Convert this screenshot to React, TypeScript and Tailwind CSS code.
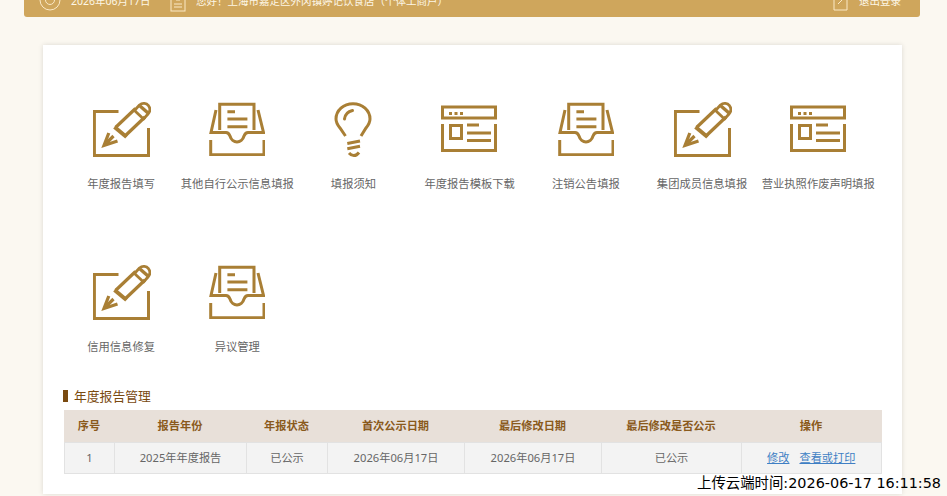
const CJK = "font-['Noto_Sans','Noto_Sans_CJK_SC',sans-serif]";

function PencilIcon() {
  return (
    <svg width="58" height="56" viewBox="0 0 58 56" fill="none" stroke="#a97f35" strokeWidth="3" className="ml-[1px]">
      <path d="M25.500 9.500H1.400V53.500H55.500V26" />
      <path d="M15.800 31L11 43.500L24.500 39" strokeWidth="3.200" />
      <path d="M13.500 41L20.500 34" strokeWidth="3.200" />
      <path d="M22.500 25.500L42.500 6.500M32 34L52 15" strokeWidth="3.200" />
      <path d="M21.500 25L33.500 35" strokeWidth="4" />
      <path d="M41.500 8.500L46.500 3C49.500 0.500 53.500 1.200 55.500 3.700C57.500 6.500 57 9.800 55 12L50.500 17Z" strokeWidth="2.800" strokeLinejoin="round" />
      <path d="M47 4L55 11" strokeWidth="3.400" />
    </svg>
  );
}

function InboxIcon() {
  return (
    <svg width="56" height="54" viewBox="0 0 56 54" fill="none" stroke="#a97f35" strokeWidth="3">
      <path d="M10.700 28V2.300H45V28" />
      <path d="M7 8L2 30.500H17C19 30.500 20 31.500 21 34C22 37.500 25 40 28 40C31 40 34 37.500 35 34C36 31.500 37 30.500 39 30.500H54.500L49 8" />
      <path d="M1.700 38V52.700H55V38" />
      <path d="M18.400 9.700H26M18.400 17H38.400M18.400 24.700H38.400" />
    </svg>
  );
}

function BulbIcon() {
  return (
    <svg width="40" height="58" viewBox="0 0 40 58" fill="none" stroke="#a97f35" strokeWidth="3" className="ml-[1px]">
      <path d="M11.500 34L6 26C3.500 23 2 20.500 2 17C2 8.500 9.500 1.700 19 1.700C28.500 1.700 36 8.500 36 17C36 20.500 34.500 23 32 26L27 34" />
      <path d="M10.500 17C11 13 14 9.500 18.500 8.500" strokeLinecap="round" />
      <path d="M13.300 41.500L26 39M13.300 46.800L26 44.300" />
      <path d="M15 51C18 54.500 22 54.500 25 50.500" />
    </svg>
  );
}

function BrowserIcon() {
  return (
    <svg width="58" height="48" viewBox="0 0 58 48" fill="none" stroke="#a97f35" strokeWidth="3" className="ml-[1px] mt-[3px]">
      <rect x="1.500" y="2" width="53" height="11" />
      <path d="M8 8.500h3M13.500 8.500h3M19 8.500h3" />
      <path d="M1.500 19V45.500H54.500V19" />
      <rect x="9.500" y="20.500" width="11" height="13" />
      <path d="M26 20h12M26 28h24M26 35.500h24" />
    </svg>
  );
}

const rows: { label: string; icon: "pencil" | "inbox" | "bulb" | "browser" }[][] = [
  [
    { label: "年度报告填写", icon: "pencil" },
    { label: "其他自行公示信息填报", icon: "inbox" },
    { label: "填报须知", icon: "bulb" },
    { label: "年度报告模板下载", icon: "browser" },
    { label: "注销公告填报", icon: "inbox" },
    { label: "集团成员信息填报", icon: "pencil" },
    { label: "营业执照作废声明填报", icon: "browser" },
  ],
  [
    { label: "信用信息修复", icon: "pencil" },
    { label: "异议管理", icon: "inbox" },
  ],
];

function Icon({ name }: { name: string }) {
  if (name === "pencil") return <PencilIcon />;
  if (name === "inbox") return <InboxIcon />;
  if (name === "bulb") return <BulbIcon />;
  return <BrowserIcon />;
}

const headers = ["序号", "报告年份", "年报状态", "首次公示日期", "最后修改日期", "最后修改是否公示", "操作"];
const widths = ["w-[50px]", "w-[132px]", "w-[81px]", "w-[137px]", "w-[137px]", "w-[140px]", "w-[140px]"];
const cells = ["1", "2025年年度报告", "已公示", "2026年06月17日", "2026年06月17日", "已公示"];

export default function App() {
  return (
    <div className={`relative h-[496px] w-[947px] overflow-hidden bg-[#fbf8f1] ${CJK}`}>
      <div className="ml-[24px] mr-[27px] flex h-[17px] items-center overflow-hidden rounded-b-[3px] bg-[#cfa65c] text-[10.500px] text-[#fdf6e6]">
        <div className="-mt-[14px] flex h-[17px] w-full items-center pl-[15px] pr-[19px]">
          <svg width="22" height="22" viewBox="0 0 22 22" fill="none" stroke="#fbe9c6" strokeWidth="1" className="-mt-[3px] shrink-0">
            <circle cx="11" cy="11" r="10" />
            <circle cx="11" cy="11" r="4.500" />
          </svg>
          <span className="ml-[10px] w-[99px] shrink-0">2026年06月17日</span>
          <svg width="16" height="20" viewBox="0 0 16 20" fill="none" stroke="#fbe9c6" strokeWidth="1" className="shrink-0">
            <rect x="1" y="1" width="14" height="18" />
            <path d="M4 15h8M4 12h8M6 8h4" />
          </svg>
          <span className="ml-[10px]">您好！上海市嘉定区外冈镇婷记饮食店（个体工商户）</span>
          <span className="ml-auto flex items-center gap-[10px]">
            <svg width="16" height="18" viewBox="0 0 16 18" fill="none" stroke="#fbe9c6" strokeWidth="1" className="shrink-0">
              <path d="M1 5V17H14V4M5 11L15 1" />
            </svg>
            退出登录
          </span>
        </div>
      </div>

      <div className="ml-[43px] mr-[45px] mt-[28px] h-[449px] bg-white px-[20px] pt-[57px] shadow-[0_0_5px_rgba(0,0,0,0.13)]">
        <div className="flex flex-col gap-[73px]">
          {rows.map((row, i) => (
            <div key={i} className="flex">
              {row.map((item, j) => (
                <div key={j} className="flex w-[116.200px] shrink-0 flex-col items-center">
                  <div className="flex h-[58px] items-start justify-center">
                    <Icon name={item.icon} />
                  </div>
                  <div className="mt-[16px] whitespace-nowrap text-[11.300px] leading-[16px] text-[#666666]">{item.label}</div>
                </div>
              ))}
            </div>
          ))}
        </div>

        <div className="mt-[32px] flex items-center">
          <div className="h-[12px] w-[5px] bg-[#7a4a10]" />
          <span className="ml-[6px] text-[12.800px] leading-[18px] text-[#7a4a10]">年度报告管理</span>
        </div>

        <div className="ml-[1px] mt-[5px] w-[817.500px] text-center text-[11.200px]">
          <div className="flex h-[32px] items-center bg-[#e8e0d9] font-bold text-[#8a5a1c]">
            {headers.map((h, i) => (
              <div key={h} className={`${widths[i]} shrink-0`}>{h}</div>
            ))}
          </div>
          <div className="flex h-[32px] border border-[#e2e2e2] bg-[#f3f3f3] text-[#666666]">
            {cells.map((c, i) => (
              <div key={i} className={`${widths[i]} flex shrink-0 items-center justify-center border-r border-[#e2e2e2]`}>{c}</div>
            ))}
            <div className="flex flex-1 items-center justify-center gap-[10px] text-[#3f7fc4] underline">
              <span>修改</span>
              <span>查看或打印</span>
            </div>
          </div>
        </div>
      </div>

      <div className="absolute left-[697px] top-[474px] whitespace-nowrap font-['DejaVu_Sans','Noto_Sans_CJK_SC',sans-serif] text-[14.400px] leading-[18px] text-black">
        上传云端时间:2026-06-17 16:11:58
      </div>
    </div>
  );
}
